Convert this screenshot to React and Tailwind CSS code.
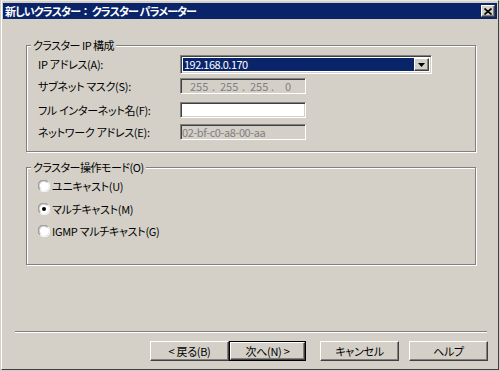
const font = "[font-family:'Noto_Sans_CJK_JP','Noto_Sans',sans-serif] [font-feature-settings:'palt']";

const sunken =
  "border border-t-[#808080] border-l-[#808080] border-b-white border-r-white shadow-[inset_1px_1px_0_#404040,inset_-1px_-1px_0_#d4d0c8]";

const raised =
  "border border-t-white border-l-white border-b-[#404040] border-r-[#404040] shadow-[inset_-1px_-1px_0_#808080]";

function GroupBox({ title, className, children }) {
  return (
    <div
      className={`relative ml-[23px] w-[450px] border border-[#808080] shadow-[inset_1px_1px_0_#fff,1px_1px_0_#fff] ${className}`}
    >
      <span className="absolute -top-[9px] left-[4px] bg-[#d4d0c8] px-[2px] text-[11px] leading-[16px] tracking-[-0.5px]">
        {title}
      </span>
      {children}
    </div>
  );
}

function Field({ label, className, children }) {
  return (
    <div className={`flex items-center pl-[11px] ${className}`}>
      <span className="w-[142px] text-[11px] tracking-[-0.3px]">{label}</span>
      {children}
    </div>
  );
}

function Radio({ checked }) {
  return (
    <svg width="12" height="12" viewBox="0 0 12 12" className="shrink-0">
      <circle cx="6" cy="6" r="5" fill="#fff" />
      <path d="M1.8 9.5 A5 5 0 0 1 9.5 1.8" fill="none" stroke="#9a9a9a" strokeWidth="1.2" />
      <path d="M2.6 8.6 A4 4 0 0 1 8.6 2.6" fill="none" stroke="#c8c8c8" strokeWidth="1" />
      <path d="M10.2 2.5 A5 5 0 0 1 2.5 10.2" fill="none" stroke="#f4f4f4" strokeWidth="1.2" />
      {checked && <circle cx="6" cy="6" r="2" fill="#000" />}
    </svg>
  );
}

function RadioRow({ label, checked, className }) {
  return (
    <div className={`flex h-[14px] items-center pl-[11px] ${className}`}>
      <Radio checked={checked} />
      <span className="ml-[2px] text-[11px] tracking-[-0.3px]">{label}</span>
    </div>
  );
}

function Button({ label, isDefault }) {
  if (isDefault) {
    return (
      <div className="h-[20px] w-[77px] border border-black">
        <div className={`flex h-full w-full items-center justify-center text-[11px] tracking-[-0.3px] ${raised}`}>
          {label}
        </div>
      </div>
    );
  }
  return (
    <div className={`flex h-[20px] w-[79px] items-center justify-center text-[11px] tracking-[-0.3px] ${raised}`}>
      {label}
    </div>
  );
}

export default function App() {
  return (
    <div className={`h-[371px] w-[500px] overflow-hidden bg-[#d4d0c8] text-black ${font}`}>
      <div className="ml-[1px] flex h-[370px] w-[498px] flex-col border border-t-[#ece9e2] border-l-white border-b-[#404040] border-r-[#404040] px-[1px] pt-[2px]">
        {/* title bar */}
        <div className="flex h-[16px] items-center justify-between bg-[#0a246a] pl-[2px] pr-[2px]">
          <span className="text-[11px] font-bold leading-none tracking-[-0.9px] text-white">
            新しいクラスター<span className="[font-feature-settings:normal]">：</span> クラスター パラメーター
          </span>
          <div className={`flex h-[12px] w-[14px] items-center justify-center bg-[#d4d0c8] ${raised}`}>
            <svg width="8" height="7" viewBox="0 0 8 7">
              <path d="M0.5 0.5 L7.5 6.5 M7.5 0.5 L0.5 6.5" stroke="#000" strokeWidth="1.6" />
            </svg>
          </div>
        </div>

        {/* cluster IP */}
        <GroupBox title="クラスター IP 構成" className="mt-[26px] h-[107px]">
          <Field label="IP アドレス(A):" className="mt-[9px]">
            <div className={`flex h-[19px] w-[252px] bg-white p-[2px] ${sunken}`}>
              <div className="flex flex-1 items-center bg-[#0a246a] pl-[1px] text-[11px] tracking-[-0.5px] text-white">
                192.168.0.170
              </div>
              <div className={`flex w-[15px] items-center justify-center bg-[#d4d0c8] ${raised}`}>
                <svg width="7" height="4" viewBox="0 0 7 4">
                  <path d="M0 0 H7 L3.5 4 Z" fill="#000" />
                </svg>
              </div>
            </div>
          </Field>
          <Field label="サブネット マスク(S):" className="mt-[4px]">
            <div className={`flex h-[16px] w-[126px] items-center bg-[#d4d0c8] pl-[9px] text-[11px] text-[#808080] ${sunken}`}>
              <span className="w-[22px]">255</span>
              <span className="w-[8px]">.</span>
              <span className="w-[22px]">255</span>
              <span className="w-[8px]">.</span>
              <span className="w-[21px]">255</span>
              <span className="w-[14px]">.</span>
              <span>0</span>
            </div>
          </Field>
          <Field label="フル インターネット名(F):" className="mt-[7px]">
            <div className={`h-[16px] w-[126px] bg-white ${sunken}`} />
          </Field>
          <Field label="ネットワーク アドレス(E):" className="mt-[6px]">
            <div className={`flex h-[16px] w-[126px] items-center bg-[#d4d0c8] pl-[1px] text-[11px] tracking-[-0.4px] text-[#808080] ${sunken}`}>
              02-bf-c0-a8-00-aa
            </div>
          </Field>
        </GroupBox>

        {/* cluster mode */}
        <GroupBox title="クラスター操作モード(O)" className="mt-[15px] h-[98px]">
          <RadioRow label="ユニキャスト(U)" className="mt-[11px]" />
          <RadioRow label="マルチキャスト(M)" checked className="mt-[9px]" />
          <RadioRow label="IGMP マルチキャスト(G)" className="mt-[8px]" />
        </GroupBox>

        {/* separator */}
        <div className="ml-[12px] mt-[66px] h-[2px] w-[472px] border-t border-b border-t-[#808080] border-b-white" />

        {/* buttons */}
        <div className="ml-[147px] mt-[8px] flex">
          <Button label="< 戻る(B)" />
          <Button label="次へ(N) >" isDefault />
          <div className="ml-[14px]">
            <Button label="キャンセル" />
          </div>
          <div className="ml-[10px]">
            <Button label="ヘルプ" />
          </div>
        </div>
      </div>
    </div>
  );
}
